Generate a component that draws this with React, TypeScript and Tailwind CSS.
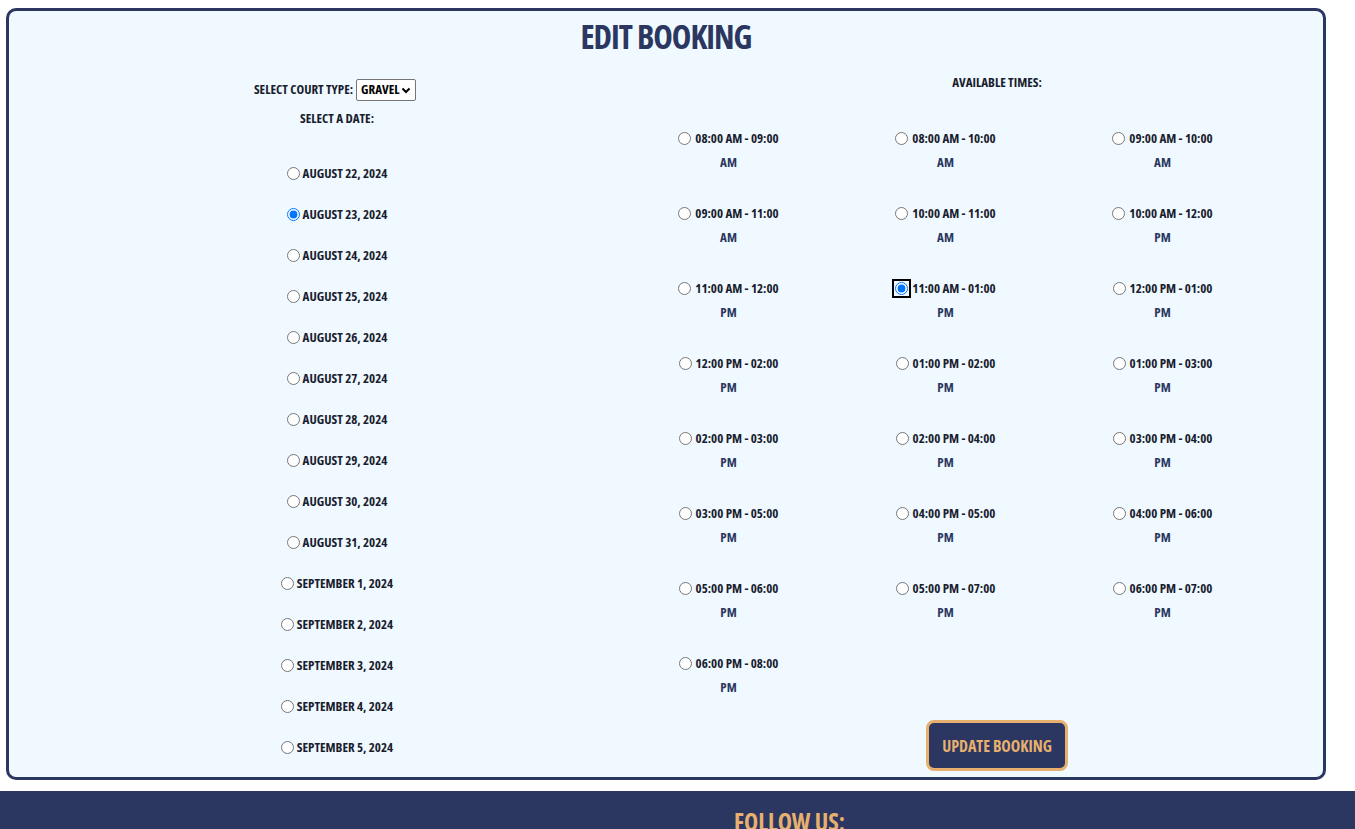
import React from "react";

const dates = [
  "August 22, 2024",
  "August 23, 2024",
  "August 24, 2024",
  "August 25, 2024",
  "August 26, 2024",
  "August 27, 2024",
  "August 28, 2024",
  "August 29, 2024",
  "August 30, 2024",
  "August 31, 2024",
  "September 1, 2024",
  "September 2, 2024",
  "September 3, 2024",
  "September 4, 2024",
  "September 5, 2024",
];

const times: [string, string][] = [
  ["08:00 AM - 09:00", "AM"],
  ["08:00 AM - 10:00", "AM"],
  ["09:00 AM - 10:00", "AM"],
  ["09:00 AM - 11:00", "AM"],
  ["10:00 AM - 11:00", "AM"],
  ["10:00 AM - 12:00", "PM"],
  ["11:00 AM - 12:00", "PM"],
  ["11:00 AM - 01:00", "PM"],
  ["12:00 PM - 01:00", "PM"],
  ["12:00 PM - 02:00", "PM"],
  ["01:00 PM - 02:00", "PM"],
  ["01:00 PM - 03:00", "PM"],
  ["02:00 PM - 03:00", "PM"],
  ["02:00 PM - 04:00", "PM"],
  ["03:00 PM - 04:00", "PM"],
  ["03:00 PM - 05:00", "PM"],
  ["04:00 PM - 05:00", "PM"],
  ["04:00 PM - 06:00", "PM"],
  ["05:00 PM - 06:00", "PM"],
  ["05:00 PM - 07:00", "PM"],
  ["06:00 PM - 07:00", "PM"],
  ["06:00 PM - 08:00", "PM"],
];

export default function App() {
  return (
    <div className="min-h-[829px] bg-white font-['Open_Sans',sans-serif] font-stretch-[75%] font-bold uppercase text-[#1a1d2e]">
      <div className="pt-[8px] pl-[6px]">
        <div className="w-[1320px] h-[772px] rounded-[10px] border-[3px] border-[#2b3760] bg-[#eff9ff] flex flex-col">
          <h1 className="text-center text-[33px] leading-[42px] mt-[5px] tracking-[-1px] text-[#2b3760]">
            Edit Booking
          </h1>
          <div className="flex flex-1">
            <div className="w-[656px] flex flex-col items-center">
              <div className="mt-[21px] h-[22px] flex items-center text-[13px] mr-[4px]">
                <span>Select Court Type:</span>
                <span className="ml-[3px] h-[22px] w-[60px] border border-[#767676] rounded-[2px] bg-white flex items-center justify-between pl-[4px] pr-[4px] text-black">
                  <span>Gravel</span>
                  <svg width="10" height="7" viewBox="0 0 10 7">
                    <path d="M1.5 1.5 L5 5 L8.5 1.5" fill="none" stroke="black" strokeWidth="2" />
                  </svg>
                </span>
              </div>
              <div className="mt-[7px] leading-[20px] text-[13px]">Select a Date:</div>
              <div className="mt-[25px] flex flex-col items-center">
                {dates.map((d, i) => (
                  <label key={d} className="h-[41px] flex items-center text-[13px]">
                    <input
                      type="radio"
                      name="date"
                      defaultChecked={i === 1}
                      className="m-0 mr-[3px] w-[13px] h-[13px]"
                    />
                    <span>{d}</span>
                  </label>
                ))}
              </div>
            </div>
            <div className="flex-1 flex flex-col items-center pl-[6px]">
              <div className="mt-[14px] leading-[20px] text-[13px]">Available Times:</div>
              <div className="self-start ml-[-51px] mt-[34px] grid grid-cols-[217px_217px_217px] gap-y-[27px]">
                {times.map(([a, b], i) => (
                  <div key={a} className="text-center text-[13px] leading-[24px]">
                    <div className="flex items-center justify-center">
                      <input
                        type="radio"
                        name="time"
                        defaultChecked={i === 7}
                        className={
                          "m-0 mr-[4px] w-[13px] h-[13px] " +
                          (i === 7 ? "outline-2 outline-black outline-offset-[1px] rounded-[3px]" : "")
                        }
                      />
                      <span>{a}</span>
                    </div>
                    <div className="text-[#2b3760]">{b}</div>
                  </div>
                ))}
              </div>
              <button className="mt-[21px] h-[51px] px-[13px] rounded-[8px] border-[3px] border-[#e8b06e] bg-[#2b3760] text-[#e8b06e] text-[16px] uppercase">
                Update Booking
              </button>
            </div>
          </div>
        </div>
      </div>
      <footer className="mt-[11px] bg-[#2b3760] h-[60px] flex justify-center">
        <div className="ml-[224px] mt-[16px] text-[24px] leading-[30px] text-[#e8b06e]">Follow Us:</div>
      </footer>
    </div>
  );
}
